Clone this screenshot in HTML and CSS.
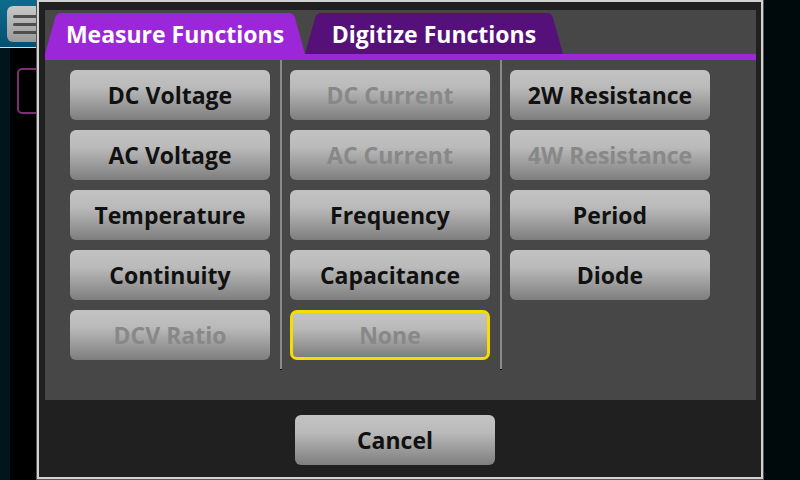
FILE: index.html
```html
<!DOCTYPE html>
<html>
<head>
<meta charset="utf-8">
<link rel="stylesheet" href="styles.css">
</head>
<body>
<div class="app">
  <div class="topbar">
    <div class="menu-btn"><span></span><span></span><span></span></div>
  </div>
  <div class="app-body">
    <div class="slot"></div>
  </div>
</div>

<div class="dialog">
  <div class="panel">
    <div class="tabs">
      <div class="tab tab-active">Measure Functions</div>
      <div class="tab tab-inactive">Digitize Functions</div>
    </div>
    <div class="stripe"></div>
    <div class="grid">
      <div class="col">
        <button class="btn">DC Voltage</button>
        <button class="btn">AC Voltage</button>
        <button class="btn">Temperature</button>
        <button class="btn">Continuity</button>
        <button class="btn btn-disabled">DCV Ratio</button>
      </div>
      <div class="divider"></div>
      <div class="col">
        <button class="btn btn-disabled">DC Current</button>
        <button class="btn btn-disabled">AC Current</button>
        <button class="btn">Frequency</button>
        <button class="btn">Capacitance</button>
        <button class="btn btn-disabled btn-selected">None</button>
      </div>
      <div class="divider"></div>
      <div class="col">
        <button class="btn">2W Resistance</button>
        <button class="btn btn-disabled">4W Resistance</button>
        <button class="btn">Period</button>
        <button class="btn">Diode</button>
      </div>
    </div>
  </div>
  <div class="footer">
    <button class="btn btn-cancel">Cancel</button>
  </div>
</div>
</body>
</html>
```
FILE: styles.css
```css
* { box-sizing: border-box; }
html, body {
  margin: 0;
  padding: 0;
  width: 800px;
  height: 480px;
  overflow: hidden;
  background: #000a0c;
  font-family: "Open Sans", "DejaVu Sans", sans-serif;
}

.app {
  width: 740px;
  height: 480px;
  display: flex;
  flex-direction: column;
}
.topbar {
  height: 48px;
  background: linear-gradient(#0c6c8c, #045072);
  border-bottom: 1px solid #d8dde0;
  padding: 6px 0 0 7px;
}
.menu-btn {
  width: 44px;
  height: 36px;
  border-radius: 6px;
  background: linear-gradient(#c8c8c8, #9a9a9a);
  display: flex;
  flex-direction: column;
  justify-content: center;
  gap: 5px;
  padding-left: 6px;
}
.menu-btn span {
  display: block;
  width: 30px;
  height: 3px;
  border-radius: 2px;
  background: #4e4e4e;
}
.app-body {
  flex: 1;
  background: linear-gradient(90deg, #00161c 0, #00161c 10px, #000 10px);
  padding: 20px 0 0 17px;
}
.slot {
  width: 40px;
  height: 46px;
  border: 2px solid #7c2e78;
  border-radius: 5px;
}

.dialog {
  position: absolute;
  left: 37px;
  top: 0;
  width: 726px;
  height: 479px;
  border: 2px solid #d2d2d2;
  outline: 1px solid #555;
  background: #202020;
  padding: 8px 5px 0 6px;
}
.panel {
  height: 390px;
  background: #474747;
  padding-top: 3px;
}
.tabs {
  display: flex;
  height: 41px;
}
.tab {
  height: 41px;
  color: #fff;
  font-weight: 700;
  font-size: 23px;
  line-height: 41px;
  text-align: center;
  padding-top: 1px;
}
.tab-active {
  width: 260px;
  background: #9b27d8;
  clip-path: path('M0 41 L10 5 Q11.5 0 16.5 0 L243.5 0 Q248.5 0 250 5 L260 41 Z');
}
.tab-inactive {
  width: 258px;
  background: #551179;
  clip-path: path('M0 41 L10 5 Q11.5 0 16.5 0 L241.5 0 Q246.5 0 248 5 L258 41 Z');
}
.stripe {
  height: 6px;
  background: #9b27d8;
}
.grid {
  display: flex;
  padding-left: 25px;
}
.col {
  width: 200px;
  padding: 10px 0;
  display: flex;
  flex-direction: column;
  gap: 10px;
}
.divider {
  width: 2px;
  height: 310px;
  margin: 0 8px 0 10px;
  background: #8a8a8a;
  border-bottom: 1px solid #000;
}
.btn {
  display: block;
  width: 200px;
  height: 50px;
  border: none;
  border-radius: 6px;
  background: linear-gradient(#c3c3c3 0%, #bababa 35%, #7e7e7e 100%);
  color: #111;
  font-family: "Open Sans", "DejaVu Sans", sans-serif;
  font-weight: 700;
  font-size: 23px;
  padding: 0;
  text-align: center;
}
.btn-disabled {
  color: #888;
}
.btn-selected {
  border: 3px solid #f7dc00;
  border-radius: 7px;
}
.footer {
  padding: 15px 0 0 250px;
}
```
